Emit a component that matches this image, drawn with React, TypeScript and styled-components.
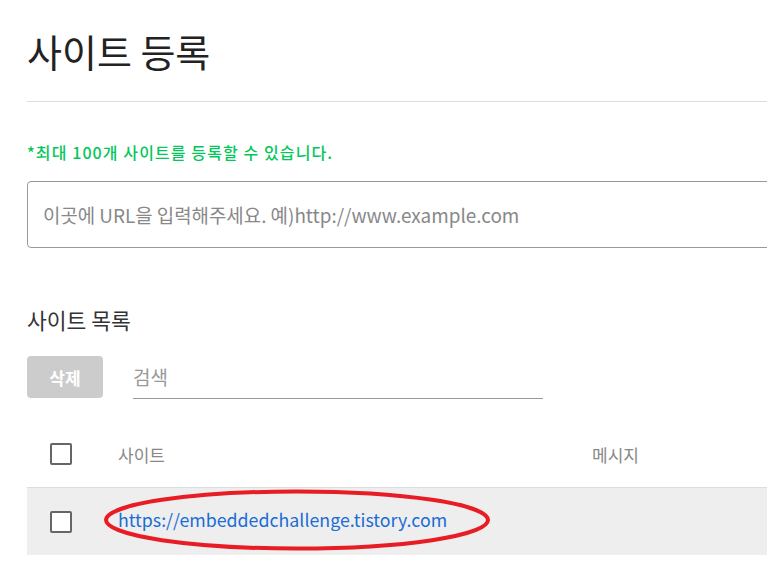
import React from 'react'
import styled, { createGlobalStyle } from 'styled-components'

const GlobalStyle = createGlobalStyle`
    html, body {
        margin: 0;
        padding: 0;
        background: #fff;
        overflow: hidden;
    }
    body {
        font-family: "Noto Sans CJK KR", "Noto Sans", sans-serif;
        color: #222;
    }
`

const Page = styled.div`
    width: 900px;
    padding: 26px 0 0 27px;
`

const Title = styled.h1`
    margin: 0;
    font-size: 38px;
    font-weight: 400;
    line-height: 50px;
    color: #222;
    padding-bottom: 25px;
    border-bottom: 1px solid #ddd;
`

const Notice = styled.p`
    margin: 40px 0 0;
    font-size: 16px;
    font-weight: 500;
    letter-spacing: 1.1px;
    line-height: 20px;
    color: #03c75a;
`

const UrlInput = styled.input`
    display: block;
    box-sizing: border-box;
    width: 100%;
    height: 67px;
    margin-top: 19px;
    padding: 0 15px;
    border: 1px solid #999;
    border-radius: 4px;
    font-family: inherit;
    font-size: 18.9px;
    color: #222;
    outline: none;

    &::placeholder {
        color: #888;
    }
`

const SectionTitle = styled.h2`
    margin: 58px 0 0;
    font-size: 21.5px;
    font-weight: 400;
    line-height: 28px;
    color: #333;
`

const Toolbar = styled.div`
    display: flex;
    align-items: flex-end;
    gap: 30px;
    margin-top: 20px;
`

const DeleteButton = styled.button`
    width: 76px;
    height: 42px;
    margin-bottom: 1px;
    border: none;
    border-radius: 4px;
    background: #ccc;
    color: #fff;
    font-family: inherit;
    font-size: 17px;
    font-weight: 700;
`

const SearchInput = styled.input`
    box-sizing: border-box;
    width: 410px;
    height: 45px;
    padding: 0;
    border: none;
    border-bottom: 1px solid #999;
    font-family: inherit;
    font-size: 19px;
    outline: none;

    &::placeholder {
        color: #999;
    }
`

const Table = styled.div`
    margin-top: 22px;
`

const Row = styled.div<{ $selected?: boolean }>`
    position: relative;
    display: grid;
    grid-template-columns: 91px 474px 1fr;
    align-items: center;
    height: ${p => (p.$selected ? 67 : 66)}px;
    background: ${p => (p.$selected ? '#eee' : '#fff')};
    border-top: ${p => (p.$selected ? '1px solid #ddd' : 'none')};
`

const Check = styled.span`
    box-sizing: border-box;
    display: block;
    width: 22px;
    height: 22px;
    margin-left: 23px;
    border: 2px solid #666;
    border-radius: 2px;
    background: #fff;
`

const HeadCell = styled.span`
    font-size: 17px;
    color: #888;
`

const SiteLink = styled.a`
    font-size: 17.8px;
    line-height: 1;
    padding-bottom: 4px;
    color: #1a6dd6;
    text-decoration: none;
`

const Mark = styled.svg`
    position: absolute;
    left: 76px;
    top: 1px;
    pointer-events: none;
`

export default function App() {
    return (
        <Page>
            <GlobalStyle />
            <Title>사이트 등록</Title>
            <Notice>*최대 100개 사이트를 등록할 수 있습니다.</Notice>
            <UrlInput placeholder="이곳에 URL을 입력해주세요. 예)http://www.example.com" />
            <SectionTitle>사이트 목록</SectionTitle>
            <Toolbar>
                <DeleteButton>삭제</DeleteButton>
                <SearchInput placeholder="검색" />
            </Toolbar>
            <Table>
                <Row>
                    <Check />
                    <HeadCell>사이트</HeadCell>
                    <HeadCell>메시지</HeadCell>
                </Row>
                <Row $selected>
                    <Check />
                    <SiteLink href="#">https://embeddedchallenge.tistory.com</SiteLink>
                    <span />
                    <Mark width="390" height="62" viewBox="0 0 390 62">
                        <ellipse cx="194" cy="31" rx="191" ry="28.5" fill="none" stroke="#e81c24" strokeWidth="4" />
                    </Mark>
                </Row>
            </Table>
        </Page>
    )
}
